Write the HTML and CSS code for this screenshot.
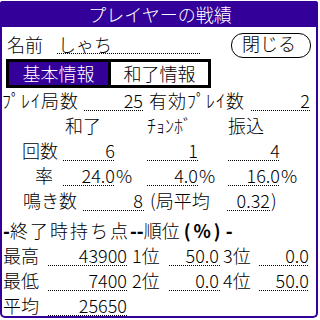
FILE: index.html
```html
<!DOCTYPE html>
<html lang="ja">
<head>
<meta charset="utf-8">
<title>プレイヤーの戦績</title>
<link rel="stylesheet" href="styles.css">
</head>
<body>
<div class="frame">
  <div class="title">プレイヤーの戦績</div>

  <div class="row row-name">
    <span class="name-lbl">名前</span>
    <span class="fld name-fld">しゃち</span>
    <span class="btn">閉じる</span>
  </div>

  <div class="tabs">
    <span class="tab on">基本情報</span>
    <span class="tab off">和了情報</span>
  </div>

  <div class="row">
    <span class="games-lbl">ﾌﾟﾚｲ局数</span>
    <span class="fld num games-fld">25</span>
    <span class="valid-lbl">有効ﾌﾟﾚｲ数</span>
    <span class="fld num valid-fld">2</span>
  </div>

  <div class="stats">
    <span></span>
    <span class="head h1">和了</span>
    <span class="head">ﾁｮﾝﾎﾞ</span>
    <span class="head">振込</span>

    <span class="count-lbl">回数</span>
    <span class="cell"><span class="fld num c1">6</span></span>
    <span class="cell"><span class="fld num c2">1</span></span>
    <span class="cell"><span class="fld num c3">4</span></span>

    <span class="rate-lbl">率</span>
    <span class="cell"><span class="fld num c1">24.0</span><span class="pct">%</span></span>
    <span class="cell"><span class="fld num c2">4.0</span><span class="pct">%</span></span>
    <span class="cell"><span class="fld num c3">16.0</span><span class="pct">%</span></span>
  </div>

  <div class="row">
    <span class="naki-lbl">鳴き数</span>
    <span class="fld num naki-fld">8</span>
    <span class="avg-lbl">(局平均</span>
    <span class="fld num avg-fld">0.32</span>
    <span class="close-paren">)</span>
  </div>

  <div class="row section">
    <b class="dash">-</b><span class="sec-text">終了時持ち点</span><b class="dash">--</b><span>順位</span><b class="paren">(%)</b><b class="dash">-</b>
  </div>

  <div class="row">
    <span class="pt-lbl">最高</span>
    <span class="fld num pt-fld">43900</span>
    <span class="rank-lbl">1位</span>
    <span class="fld num rank-fld">50.0</span>
    <span class="rank2-lbl">3位</span>
    <span class="fld num rank2-fld">0.0</span>
  </div>
  <div class="row">
    <span class="pt-lbl">最低</span>
    <span class="fld num pt-fld">7400</span>
    <span class="rank-lbl">2位</span>
    <span class="fld num rank-fld">0.0</span>
    <span class="rank2-lbl">4位</span>
    <span class="fld num rank2-fld">50.0</span>
  </div>
  <div class="row">
    <span class="pt-lbl">平均</span>
    <span class="fld num pt-fld">25650</span>
  </div>
</div>
</body>
</html>
```

FILE: styles.css
```css
html, body {
  margin: 0;
  padding: 0;
  background: #fff;
}
body {
  font-family: "Noto Sans CJK JP", "Noto Sans", sans-serif;
  font-size: 18px;
  font-weight: 300;
  color: #000;
  width: 320px;
  height: 320px;
  overflow: hidden;
}
.frame {
  box-sizing: border-box;
  width: 318px;
  height: 317px;
  margin-top: 1px;
  border: 2px solid #330099;
  border-top: 0;
  border-radius: 3px 3px 5px 5px;
}
.title {
  height: 26px;
  line-height: 26px;
  margin: 0 -2px;
  background: #330099;
  color: #fff;
  text-align: center;
  border-radius: 3px 3px 0 0;
  padding-left: 2px;
}
.row {
  display: flex;
  height: 25px;
  line-height: 25px;
  white-space: nowrap;
}
.fld {
  display: block;
  box-sizing: border-box;
  height: 25px;
  background-image: linear-gradient(to right, #000 1px, transparent 1px);
  background-size: 2px 1px;
  background-repeat: repeat-x;
  background-position: 0 22px;
}
.num {
  text-align: right;
}

/* name row */
.row-name {
  margin-top: 5px;
}
.name-lbl {
  margin-left: 5px;
  width: 36px;
}
.name-fld {
  margin-left: 14px;
  width: 143px;
  padding-left: 1px;
  background-position: 0 21px;
}
.btn {
  box-sizing: border-box;
  margin-left: 31px;
  margin-top: 1px;
  width: 80px;
  height: 25px;
  border: 1px solid #000;
  border-radius: 12px;
  line-height: 19px;
  text-align: center;
  padding-right: 4px;
}

/* tabs */
.tabs {
  display: flex;
  box-sizing: border-box;
  margin-top: 2px;
  margin-left: 4px;
  width: 205px;
  height: 29px;
  border: 3px solid #000;
}
.tab {
  line-height: 23px;
  text-align: center;
}
.tab.on {
  width: 99px;
  background: #330099;
  color: #fff;
}
.tab.off {
  flex: 1;
  border-left: 3px solid #000;
}

/* games row */
.games-lbl { width: 82px; letter-spacing: 1px; }
.games-fld { width: 60px; padding-right: 1px; }
.valid-lbl { margin-left: 5px; width: 102px; letter-spacing: 1px; }
.valid-fld { width: 60px; padding-right: 1px; }

/* stats grid */
.stats {
  display: grid;
  grid-template-columns: 61px 84px 81px 83px;
  grid-auto-rows: 25px;
  line-height: 25px;
  white-space: nowrap;
}
.head.h1 { padding-left: 2px; }
.cell { display: flex; }
.c1 { width: 52px; }
.c2 { width: 51px; }
.c3 { width: 52px; }
.pct { margin-left: 1px; }
.count-lbl { padding-left: 20px; }
.rate-lbl { padding-left: 33px; }

/* naki row */
.naki-lbl { padding-left: 21px; width: 60px; }
.naki-fld { width: 61px; padding-right: 1px; }
.avg-lbl { margin-left: 6px; width: 77px; }
.avg-fld { width: 43px; }
.close-paren { margin-left: 1px; }

/* section header */
.section {
  margin-top: 5px;
  padding-left: 1px;
}
.dash {
  font-weight: 900;
}
.sec-text { letter-spacing: 2px; }
.paren {
  font-weight: 700;
  margin-left: 4px;
  letter-spacing: 3px;
  margin-right: 2px;
}

/* points rows */
.pt-lbl { padding-left: 1px; width: 45px; }
.pt-fld { width: 80px; padding-right: 1px; }
.rank-lbl { padding-left: 4px; width: 37px; }
.rank-fld { width: 51px; padding-right: 1px; }
.rank2-lbl { padding-left: 3px; width: 36px; }
.rank2-fld { width: 50px; }
```
